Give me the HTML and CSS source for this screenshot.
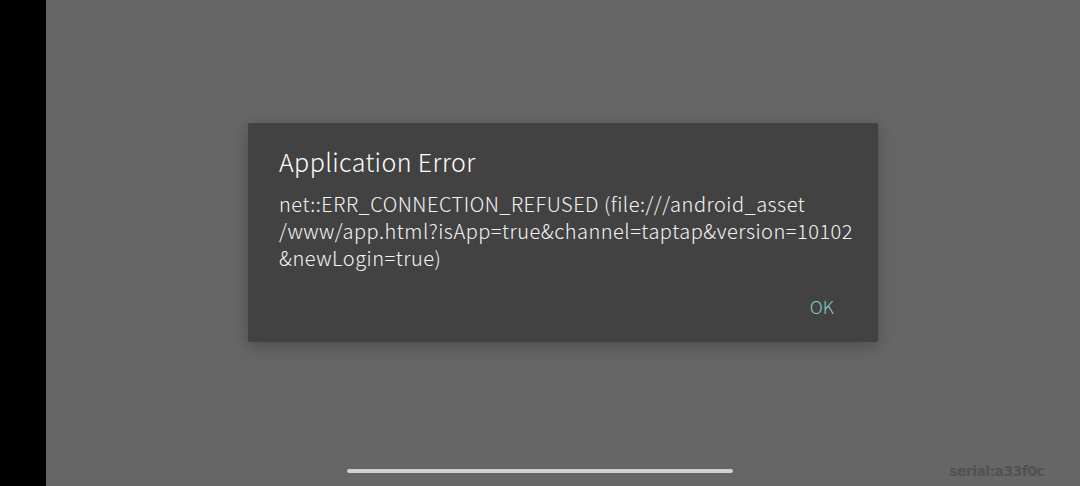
FILE: index.html
```html
<!DOCTYPE html>
<html>
<head>
<meta charset="utf-8">
<link rel="stylesheet" href="styles.css">
</head>
<body>
<div class="screen">
  <div class="cutout"></div>
  <div class="main">
    <div class="center">
      <div class="dialog">
        <div class="title">Application Error</div>
        <div class="message">
          <div class="line">net::ERR_CONNECTION_REFUSED (file:///android_asset</div>
          <div class="line">/www/app.html?isApp=true&amp;channel=taptap&amp;version=10102</div>
          <div class="line">&amp;newLogin=true)</div>
        </div>
        <div class="actions"><span class="ok">OK</span></div>
      </div>
    </div>
    <div class="bottom">
      <div class="homebar"></div>
    </div>
    <div class="serial">serial:a33f0c</div>
  </div>
</div>
</body>
</html>
```
FILE: styles.css
```css
html, body {
  margin: 0;
  padding: 0;
  width: 1080px;
  height: 486px;
  overflow: hidden;
  font-family: "Noto Sans CJK JP", "Noto Sans", sans-serif;
}
.screen {
  display: flex;
  width: 1080px;
  height: 486px;
}
.cutout {
  width: 46px;
  background: #000;
  flex: none;
}
.main {
  flex: 1;
  background: #666666;
  position: relative;
  display: flex;
  flex-direction: column;
}
.center {
  height: 466px;
  padding-top: 123px;
  box-sizing: border-box;
  padding-left: 202px;
}
.dialog {
  width: 630px;
  height: 219px;
  box-sizing: border-box;
  background: #424242;
  border-radius: 2px;
  box-shadow: 0 4px 16px rgba(0,0,0,0.25);
  padding: 20px 30px 0 31px;
  color: #fff;
}
.title {
  font-size: 25px;
  font-weight: 300;
  letter-spacing: 0.4px;
  line-height: 36px;
  height: 47px;
}
.message {
  font-size: 20px;
  font-weight: 300;
  letter-spacing: 0.5px;
  color: #f4f4f4;
  white-space: nowrap;
}
.line {
  height: 27px;
  line-height: 27px;
}
.actions {
  display: flex;
  justify-content: flex-end;
  padding-right: 14px;
  margin-top: 22px;
}
.ok {
  color: #80cbc4;
  font-size: 18px;
  font-weight: 300;
  line-height: 26px;
}
.bottom {
  flex: 1;
  display: flex;
  justify-content: center;
}
.homebar {
  width: 386px;
  height: 4px;
  border-radius: 2px;
  background: #cfcfcf;
  margin-left: -46px;
  margin-top: 3px;
}
.serial {
  position: absolute;
  right: 36px;
  bottom: 7px;
  font-family: "DejaVu Sans", sans-serif;
  font-size: 14px;
  font-weight: bold;
  color: #525252;
  letter-spacing: -0.6px;
}
```
